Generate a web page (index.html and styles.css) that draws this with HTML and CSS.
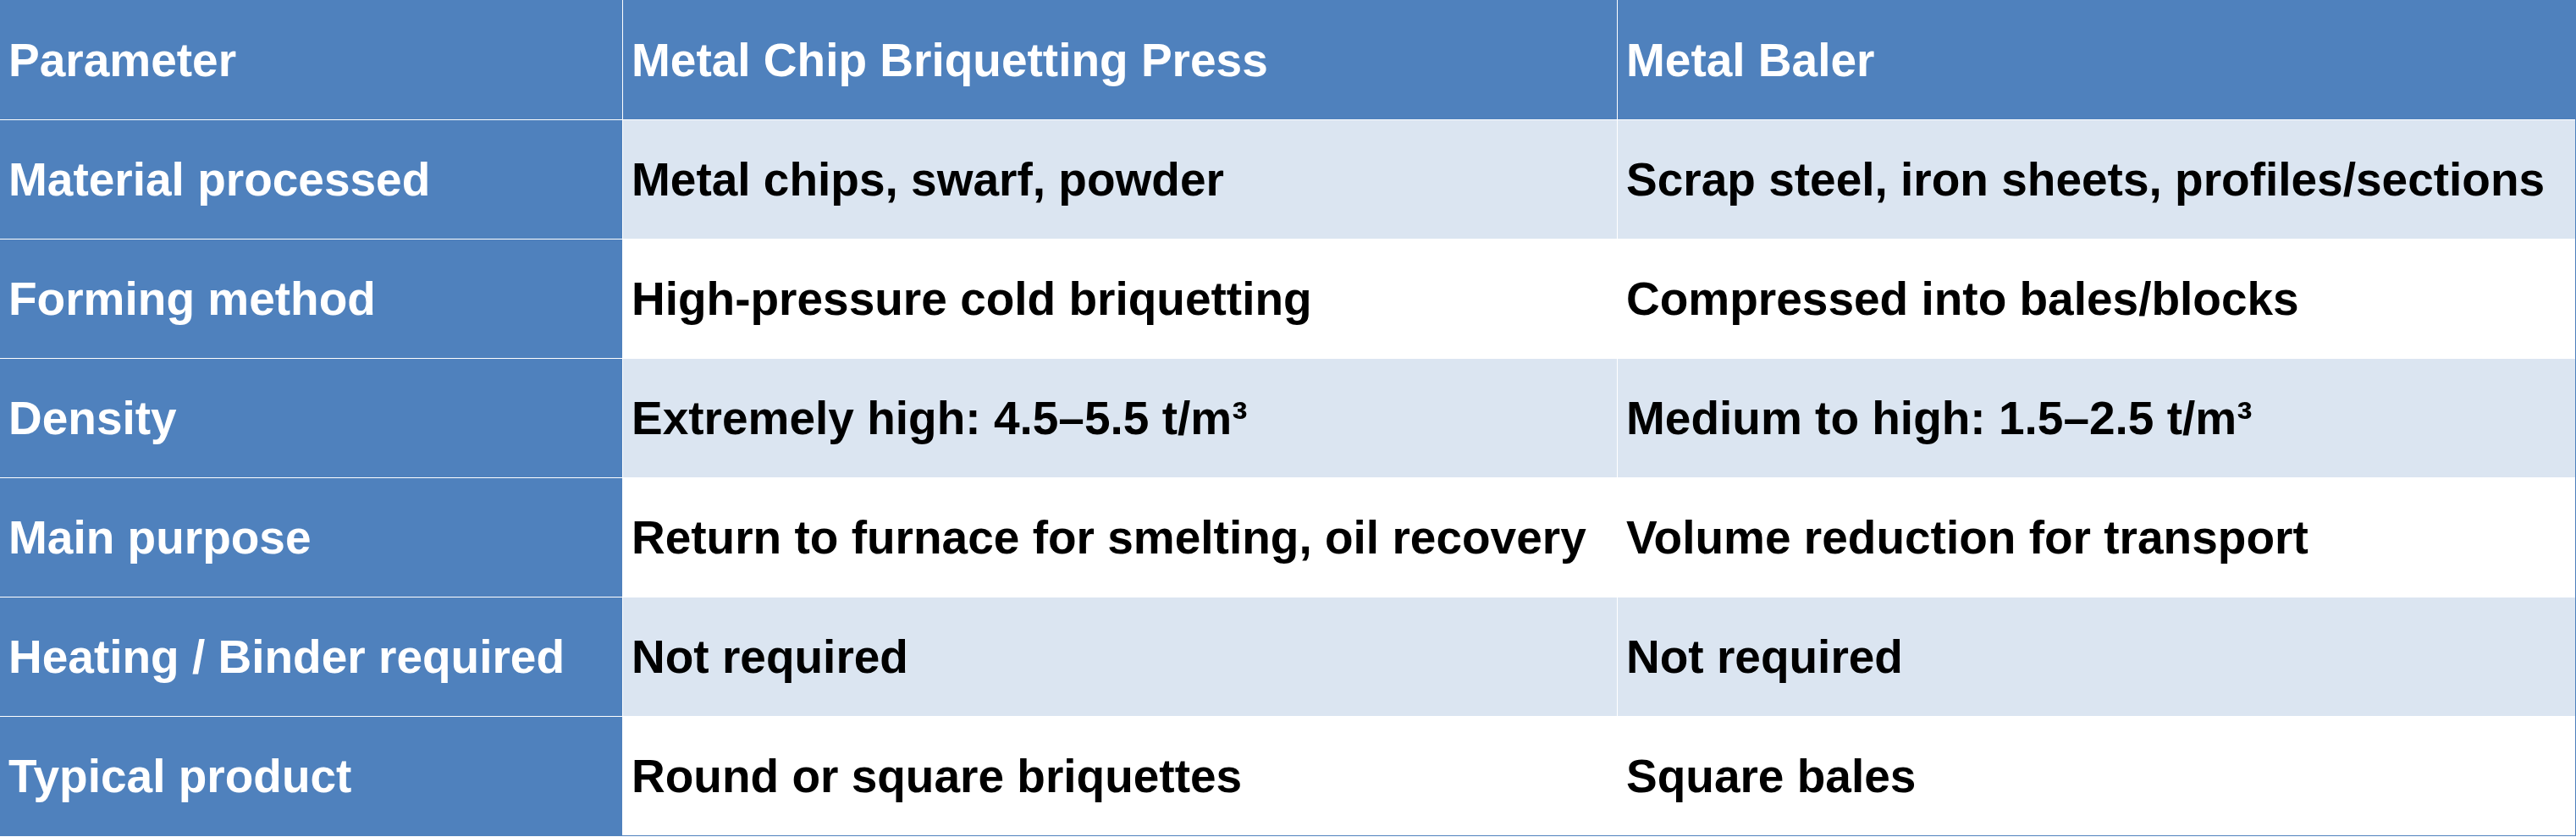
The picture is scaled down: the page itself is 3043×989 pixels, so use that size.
FILE: index.html
```html
<!DOCTYPE html>
<html>
<head>
<meta charset="utf-8">
<link rel="stylesheet" href="styles.css">
</head>
<body>
<div class="table">
  <div class="cell head">Parameter</div>
  <div class="cell head">Metal Chip Briquetting Press</div>
  <div class="cell head">Metal Baler</div>

  <div class="cell key">Material processed</div>
  <div class="cell alt">Metal chips, swarf, powder</div>
  <div class="cell alt">Scrap steel, iron sheets, profiles/sections</div>

  <div class="cell key">Forming method</div>
  <div class="cell">High-pressure cold briquetting</div>
  <div class="cell">Compressed into bales/blocks</div>

  <div class="cell key">Density</div>
  <div class="cell alt">Extremely high: 4.5–5.5 t/m³</div>
  <div class="cell alt">Medium to high: 1.5–2.5 t/m³</div>

  <div class="cell key">Main purpose</div>
  <div class="cell">Return to furnace for smelting, oil recovery</div>
  <div class="cell">Volume reduction for transport</div>

  <div class="cell key">Heating / Binder required</div>
  <div class="cell alt">Not required</div>
  <div class="cell alt">Not required</div>

  <div class="cell key">Typical product</div>
  <div class="cell">Round or square briquettes</div>
  <div class="cell">Square bales</div>
</div>
</body>
</html>
```
FILE: styles.css
```css
html, body {
  margin: 0;
  padding: 0;
  background: #ffffff;
}
.table {
  width: 3043px;
  box-sizing: border-box;
  display: grid;
  grid-template-columns: 735px 1174px 1131px;
  grid-template-rows: 141px repeat(6, 140px);
  gap: 1px;
  background: #ffffff;
  border-right: 1px solid #4F81BD;
  border-bottom: 1px solid #4F81BD;
  font-family: "Liberation Sans", Arial, sans-serif;
  font-weight: bold;
  font-size: 55px;
  color: #000000;
}
.cell {
  display: flex;
  align-items: center;
  padding-left: 10px;
  white-space: nowrap;
  background: #ffffff;
}
.head, .key {
  background: #4F81BD;
  color: #ffffff;
}
.alt {
  background: #DBE5F1;
}
```
